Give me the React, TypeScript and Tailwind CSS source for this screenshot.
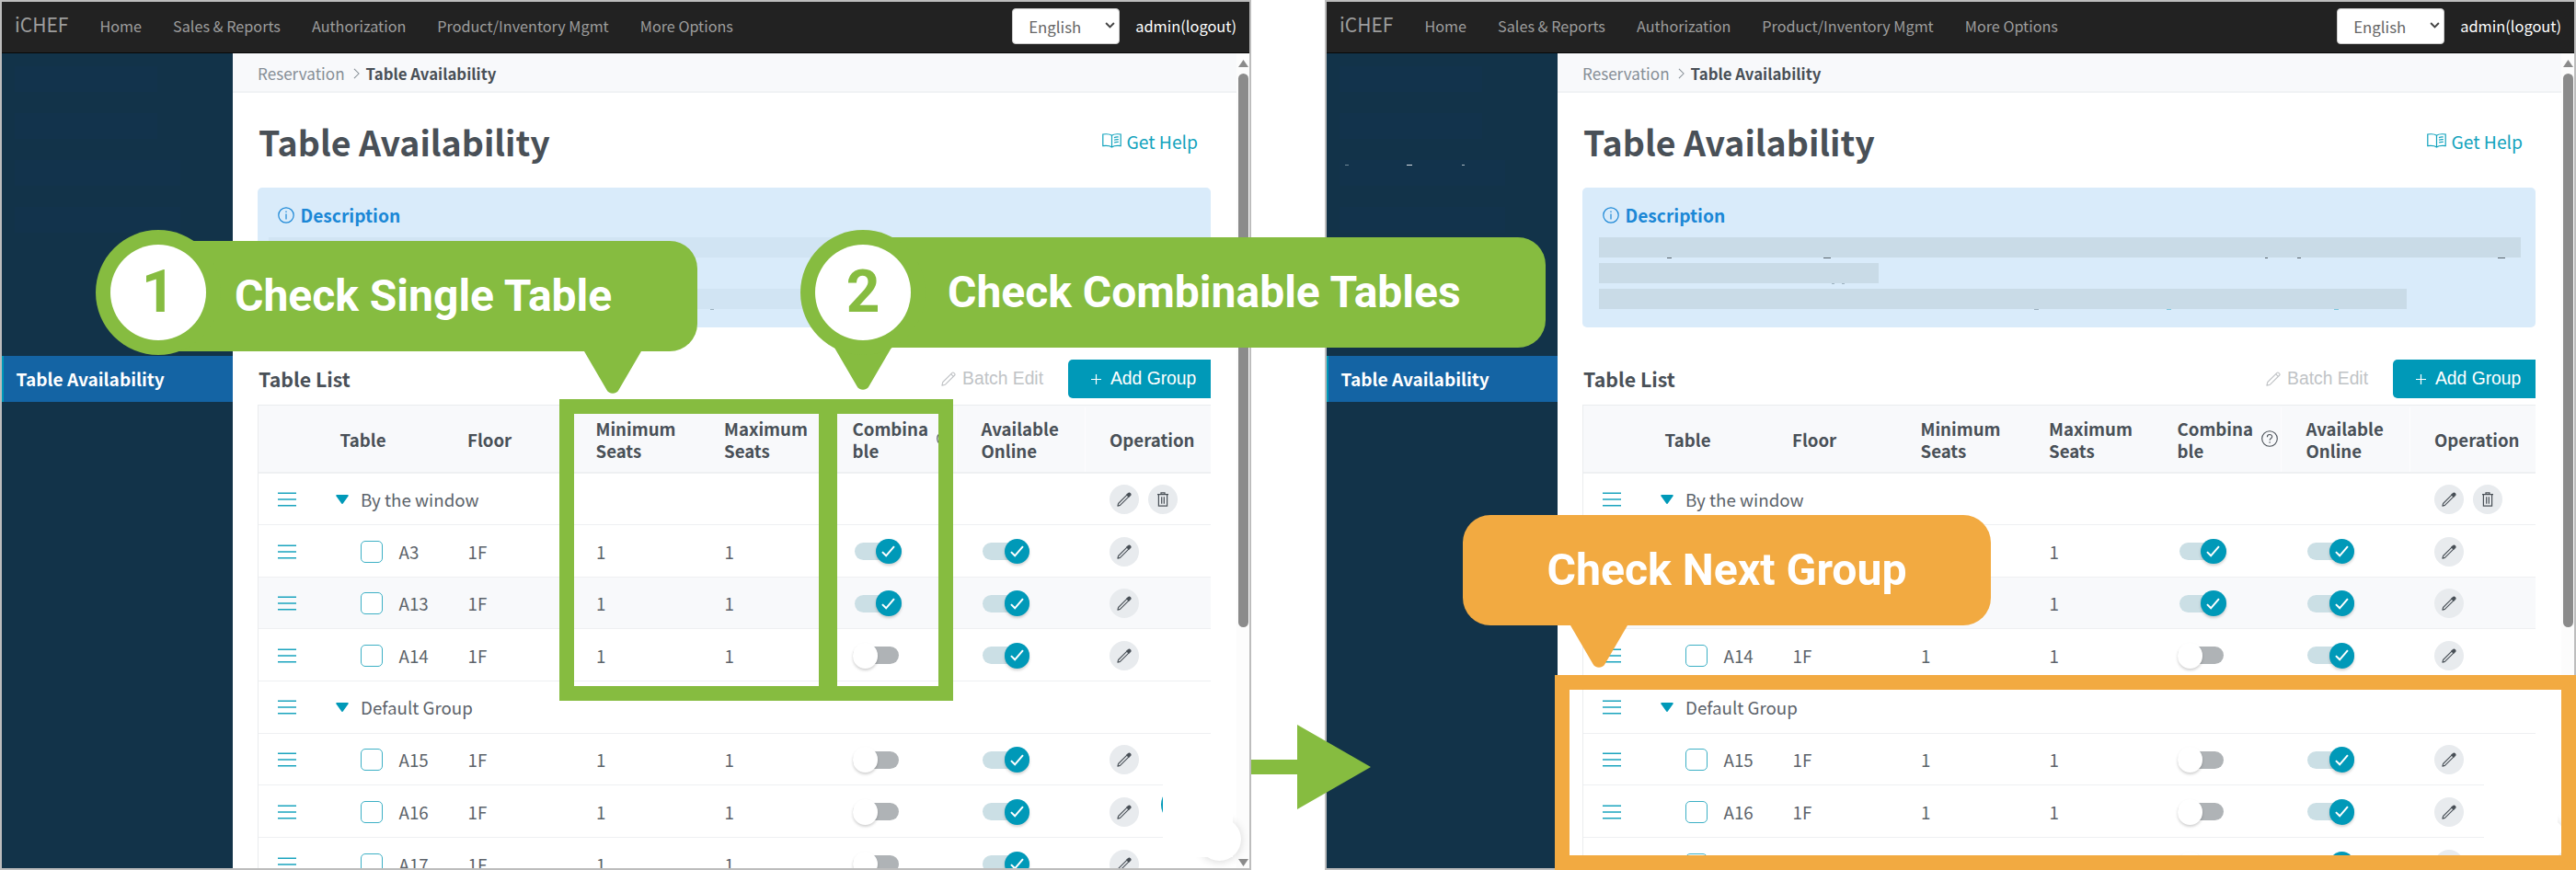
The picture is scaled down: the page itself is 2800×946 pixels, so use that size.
import React from 'react';

type Row = { kind: 'group' | 'table'; name: string; combinable?: boolean; highlighted?: boolean; removable?: boolean; editable?: boolean };

const rows: Row[] = [
  { kind: 'group', name: 'By the window', editable: true, removable: true },
  { kind: 'table', name: 'A3', combinable: true },
  { kind: 'table', name: 'A13', combinable: true, highlighted: true },
  { kind: 'table', name: 'A14' },
  { kind: 'group', name: 'Default Group' },
  { kind: 'table', name: 'A15' },
  { kind: 'table', name: 'A16' },
  { kind: 'table', name: 'A17' },
];

const navItems = ['Home', 'Sales & Reports', 'Authorization', 'Product/Inventory Mgmt', 'More Options'];

function PencilIcon({ className }: { className?: string }) {
  return (
    <svg viewBox="0 0 16 16" className={className} fill="none" stroke="currentColor" strokeWidth="1.1" strokeLinejoin="round">
      <path d="M.9 15.1l.7-2.6L11.2 2.9l1.9 1.9L3.5 14.4z" />
      <path d="M10.8 3l1.7-1.7a1.2 1.2 0 0 1 1.7 0l.5.5a1.2 1.2 0 0 1 0 1.7L13 5.2z" fill="currentColor" />
    </svg>
  );
}

function PencilOutlineIcon({ className }: { className?: string }) {
  return (
    <svg viewBox="0 0 16 16" className={className} fill="none" stroke="currentColor" strokeWidth="1.1" strokeLinejoin="round">
      <path d="M.9 15.1l.9-3.6L12 1.3a1.2 1.2 0 0 1 1.7 0l1 1a1.2 1.2 0 0 1 0 1.7L4.5 14.2z" />
      <path d="M10.6 2.7l2.7 2.7" />
    </svg>
  );
}

function TrashIcon() {
  return (
    <svg viewBox="0 0 12 16" className="h-4 w-3 text-[#495057]" fill="none" stroke="currentColor" strokeWidth="1.2">
      <path d="M0 2.6h12M4 2.4V.9h4v1.5M1.4 2.8v12.4h9.2V2.8" />
      <path d="M4.7 5.2v7.6M7.3 5.2v7.6" />
    </svg>
  );
}

function HandleIcon() {
  return (
    <svg viewBox="0 0 20 16" className="h-4 w-5" stroke="#1aa4be" strokeWidth="1.5">
      <path d="M0 1.2h20M0 8h20M0 14.8h20" />
    </svg>
  );
}

function CircleButton({ children }: { children: React.ReactNode }) {
  return <button className="flex size-8 items-center justify-center rounded-full bg-[#e8ebee]">{children}</button>;
}

function Toggle({ on }: { on?: boolean }) {
  if (on) {
    return (
      <span className="flex h-[19px] w-[51px] items-center justify-end rounded-full bg-[#cbdfe5]">
        <span className="flex size-[27.5px] shrink-0 items-center justify-center rounded-full bg-[#0099b8] shadow-[0_2px_3px_rgba(0,0,0,0.18)]">
          <svg viewBox="0 0 14 12" className="h-[13px] w-[15px]" fill="none" stroke="#fff" strokeWidth="1.9">
            <path d="M.9 6.6l3.9 3.9L13 1" />
          </svg>
        </span>
      </span>
    );
  }
  return (
    <span className="-ml-[2px] flex h-[19px] w-[50px] items-center rounded-full bg-[#afb3b6]">
      <span className="size-[27.5px] shrink-0 rounded-full bg-white shadow-[0_2px_3px_rgba(0,0,0,0.18)]" />
    </span>
  );
}

function TopBar() {
  return (
    <header className="flex h-[56px] shrink-0 border-b border-[#080808] bg-[#222222] text-[#9d9d9d]">
      <div className="flex items-baseline pt-[12px] pl-[14px] leading-[24px]">
        <span className="mr-[33px] w-[59.5px] text-[21px] whitespace-nowrap">iCHEF</span>
        <nav className="flex gap-[34px] text-[16.2px] whitespace-nowrap">
          {navItems.map((item) => (
            <span key={item}>{item}</span>
          ))}
        </nav>
      </div>
      <div className="ml-auto flex pr-[14px]">
        <button className="mt-[7px] flex h-[39px] w-[117px] items-center rounded-[4px] border border-[#cccccc] bg-white pl-[17px] text-[16.8px] leading-[24px] text-[#666666]">
          <span className="pt-px">English</span>
          <svg viewBox="0 0 12 8" className="mr-[4px] mb-[3px] ml-auto h-[7px] w-[11px]" fill="none" stroke="#444" strokeWidth="2.2">
            <path d="M1 1.2l5 5 5-5" />
          </svg>
        </button>
        <span className="mt-[14px] ml-[17px] text-[16.4px] leading-[24px] text-white">admin(logout)</span>
      </div>
    </header>
  );
}

function Sidebar({ variant }: { variant: 'first' | 'second' }) {
  return (
    <aside className="relative flex w-[251px] shrink-0 flex-col bg-[#123349]">
      <div className="flex h-[329px] flex-col gap-[23px] pt-[14px] pl-[14px]">
        <div className="h-[28px] w-[155px] bg-[#12334c]" />
        <div className="h-[28px] w-[155px] bg-[#12334c]" />
        <div className="h-[28px] w-[180px] bg-[#12334c]" />
        <div className="h-[28px] w-[180px] bg-[#12334c]" />
      </div>
      <div className="flex h-[50px] items-center border-l-2 border-[#0099b8] bg-[#1464a4] pl-[13.5px] text-[19.1px] leading-[24px] font-bold text-white">
        Table Availability
      </div>
      {variant === 'second' && (
        <>
          <span className="absolute top-[121px] left-[20px] h-px w-[4px] bg-[#6f8797]" />
          <span className="absolute top-[121px] left-[87px] h-px w-[6px] bg-[#d7dfe4]" />
          <span className="absolute top-[121px] left-[147px] h-px w-[3px] bg-[#a9b8c2]" />
        </>
      )}
    </aside>
  );
}

function Scrollbar() {
  return (
    <div className="flex w-[14px] shrink-0 flex-col items-center bg-[#fcfcfc] pr-[1px] pl-[2px]">
      <svg viewBox="0 0 11 8" className="mt-[7px] h-[8px] w-[11px]" fill="#8b8b8b">
        <path d="M5.5 0L11 8H0z" />
      </svg>
      <div className="mt-[7px] h-[602px] w-[11px] rounded-full bg-[#8b8b8b]" />
      <svg viewBox="0 0 11 8" className="mt-auto mb-[2px] h-[8px] w-[11px]" fill="#8b8b8b">
        <path d="M5.5 8L0 0h11z" />
      </svg>
    </div>
  );
}

function Description({ variant }: { variant: 'first' | 'second' }) {
  return (
    <section className="relative h-[152px] rounded-[5px] bg-[#d9ebfa] pt-[18px]">
      <div className="flex h-[24px] items-center pl-[22px] text-[#1b87d6]">
        <svg viewBox="0 0 18 18" className="size-[18px]" fill="none" stroke="currentColor" strokeWidth="1.2">
          <circle cx="9" cy="9" r="8.2" />
          <path d="M9 7.4v6M9 4.6v1.5" />
        </svg>
        <h2 className="ml-[6.5px] text-[19.2px] leading-[24px] font-bold">Description</h2>
      </div>
      {variant === 'first' ? (
        <div className="flex flex-col gap-[6px] pt-[12px] pl-[12px]">
          <div className="h-[22px] w-[1002px] bg-[#d1e4f3]" />
          <div className="h-[22px] w-[304px] bg-[#d1e4f3]" />
          <div className="h-[22px] w-[878px] bg-[#d1e4f3]" />
          <span className="absolute top-[132px] left-[492px] h-px w-[4px] bg-[#9db2c0]" />
        </div>
      ) : (
        <div className="flex flex-col gap-[6px] pt-[12px] pl-[18px]">
          <div className="h-[22px] w-[1002px] bg-[#c9dbe7]" />
          <div className="h-[22px] w-[304px] bg-[#c9dbe7]" />
          <div className="h-[22px] w-[878px] bg-[#c9dbe7]" />
          <span className="absolute top-[76px] left-[92px] h-px w-[5px] bg-[#5b6770]" />
          <span className="absolute top-[76px] left-[262px] h-px w-[8px] bg-[#5b6770]" />
          <span className="absolute top-[76px] left-[742px] h-px w-[3px] bg-[#5b6770]" />
          <span className="absolute top-[76px] left-[777px] h-px w-[4px] bg-[#5b6770]" />
          <span className="absolute top-[76px] left-[995px] h-px w-[8px] bg-[#5b6770]" />
          <span className="absolute top-[104px] left-[271px] h-px w-[3px] bg-[#9db2c0]" />
          <span className="absolute top-[104px] left-[282px] h-px w-[3px] bg-[#9db2c0]" />
          <span className="absolute top-[132px] left-[491px] h-px w-[5px] bg-[#9db2c0]" />
          <span className="absolute top-[132px] left-[635px] h-px w-[5px] bg-[#7cc6dc]" />
          <span className="absolute top-[132px] left-[817px] h-px w-[5px] bg-[#7cc6dc]" />
        </div>
      )}
    </section>
  );
}

function TableHeader() {
  return (
    <div className="grid h-[75px] grid-cols-[60.5px_repeat(7,139.5px)] items-stretch border-t border-b-2 border-t-[#eaecee] border-b-[#eef0f2] bg-[#f8f9fb] pt-[1.5px] text-[18.65px] leading-[23.5px] font-bold text-[#495057]">
      <div />
      <div className="flex items-center pl-[28px]">Table</div>
      <div className="flex items-center pl-[27px]">Floor</div>
      <div className="flex items-center pl-[27px]">
        Minimum
        <br />
        Seats
      </div>
      <div className="flex items-center pl-[27px]">
        Maximum
        <br />
        Seats
      </div>
      <div className="flex items-center pl-[27px]">
        <span className="w-[91px]">
          Combina
          <br />
          ble
        </span>
        <svg viewBox="0 0 18 18" className="mb-[2px] size-[18px] shrink-0" fill="none" stroke="#495057" strokeWidth="1.1">
          <circle cx="9" cy="9" r="8.3" />
          <path d="M6.4 7.2c0-3.6 5.3-3.4 5.3-.4 0 1.9-2.6 1.9-2.6 3.9M9.1 12.2v1.5" />
        </svg>
      </div>
      <div className="flex items-center border-l border-[#fdfdfe] pl-[26.5px]">
        Available
        <br />
        Online
      </div>
      <div className="flex items-center border-l border-[#fdfdfe] pl-[26.5px]">Operation</div>
    </div>
  );
}

function GroupRow({ row, first }: { row: Row; first: boolean }) {
  return (
    <div
      className={
        first
          ? 'grid h-[56px] grid-cols-[60.5px_837px_139.5px] items-center border-b border-[#eef0f2]'
          : 'grid h-[56.67px] grid-cols-[60.5px_837px_139.5px] items-center border-b border-[#eef0f2] pt-px'
      }
    >
      <div className="pl-[21px]">
        <HandleIcon />
      </div>
      <div className="flex items-center pl-[23.5px]">
        <svg viewBox="0 0 14 10" className="h-[10px] w-[14px]" fill="#0099b8">
          <path d="M1 0h12a.8.8 0 0 1 .7 1.2L7.8 9.5a1 1 0 0 1-1.6 0L.3 1.2A.8.8 0 0 1 1 0z" />
        </svg>
        <span className="ml-[13px]">{row.name}</span>
      </div>
      <div className="flex gap-[10px] pl-[27.5px]">
        {row.editable && (
          <CircleButton>
            <PencilIcon className="size-4 text-[#495057]" />
          </CircleButton>
        )}
        {row.removable && (
          <CircleButton>
            <TrashIcon />
          </CircleButton>
        )}
      </div>
    </div>
  );
}

function TableRow({ row }: { row: Row }) {
  return (
    <div
      className={
        row.highlighted
          ? 'grid h-[56.67px] grid-cols-[60.5px_repeat(7,139.5px)] items-center border-b border-[#eef0f2] bg-[#f8f9fb] pt-[1.5px]'
          : 'grid h-[56.67px] grid-cols-[60.5px_repeat(7,139.5px)] items-center border-b border-[#eef0f2] pt-[1.5px]'
      }
    >
      <div className="pl-[21px]">
        <HandleIcon />
      </div>
      <div className="flex items-center pl-[50px]">
        <span className="size-[24px] rounded-[5px] border-[1.5px] border-[#3db0c5] bg-white" />
        <span className="ml-[18px]">{row.name}</span>
      </div>
      <div className="pl-[27.5px]">1F</div>
      <div className="pl-[27.5px]">1</div>
      <div className="pl-[27.5px]">1</div>
      <div className="pl-[29px]">
        <Toggle on={row.combinable} />
      </div>
      <div className="pl-[29px]">
        <Toggle on />
      </div>
      <div className="pl-[27.5px]">
        <CircleButton>
          <PencilIcon className="size-4 text-[#495057]" />
        </CircleButton>
      </div>
    </div>
  );
}

function ChatBubbleCover({ variant }: { variant: 'first' | 'second' }) {
  return (
    <>
      <div className="absolute top-[887px] left-[1300px] size-[47px] rounded-full bg-white shadow-[0_1px_10px_rgba(0,0,0,0.16)]" />
      {variant === 'first' ? (
        <>
          <div className="absolute top-[853px] left-[1259.5px] size-[40px] rounded-full bg-[#0099b8]" />
          <div className="absolute top-[800px] left-[1262px] h-[130px] w-[76px] bg-white" />
        </>
      ) : (
        <div className="absolute top-[800px] left-[1258px] h-[130px] w-[80px] bg-white" />
      )}
    </>
  );
}

function Screen({ variant }: { variant: 'first' | 'second' }) {
  return (
    <div className="relative flex h-[946px] w-[1360px] shrink-0 flex-col overflow-hidden border-2 border-[#bdbdbd] bg-white">
      <TopBar />
      <div className="flex min-h-0 flex-1">
        <Sidebar variant={variant} />
        <main className="min-w-0 flex-1 overflow-hidden text-[#495057]">
          <div className="flex h-[43px] items-center border-b-2 border-[#f0f2f4] bg-[#f8f9fb] pt-[3px] pl-[27px] leading-[24px]">
            <span className="text-[17.1px] text-[#868e96]">Reservation</span>
            <svg viewBox="0 0 8 14" className="mr-[7px] mb-[1px] ml-[9px] h-[12px] w-[7px]" fill="none" stroke="#868e96" strokeWidth="1.2">
              <path d="M1 1l6 6-6 6" />
            </svg>
            <span className="text-[16.8px] font-bold">Table Availability</span>
          </div>
          <div className="w-[1063px] pl-[27px]">
            <div className="flex h-[103px] items-start justify-between pt-[29px] pl-px">
              <h1 className="text-[37.5px] leading-[48px] font-bold">Table Availability</h1>
              <a className="mt-[12px] mr-[14px] flex items-center text-[19.3px] leading-[24px] text-[#12a3bd]">
                <svg viewBox="0 0 21 16" className="mr-[6px] mb-[3px] h-[16px] w-[21px]" fill="none" stroke="currentColor" strokeWidth="1.2">
                  <path d="M10.5 2.2C8.5.7 5 .5.8 1v12.6c4-.4 7.6-.2 9.7 1.4 2.1-1.6 5.7-1.8 9.7-1.4V1C16 .5 12.5.7 10.5 2.2zM10.5 2.2V15" />
                  <path d="M13 4.6c1.5-.6 3-.7 4.8-.6M13 7.3c1.5-.6 3-.7 4.8-.6M13 10c1.5-.6 3-.7 4.8-.6" />
                </svg>
                Get Help
              </a>
            </div>
            <Description variant={variant} />
            <div className="mt-[35px] mb-[7px] flex h-[42px] items-center pl-px">
              <h2 className="text-[21.3px] leading-[28px] font-bold">Table List</h2>
              <div className="ml-auto flex h-full items-center text-[19.3px]">
                <PencilOutlineIcon className="size-4 text-[#c0c3c6]" />
                <span className="ml-[7px] font-['Liberation_Sans',Arial,sans-serif] text-[#c0c3c6]">Batch Edit</span>
                <button className="ml-[27px] flex h-full w-[155px] items-center rounded-l-[5px] bg-[#0099b8] pl-[25px] font-['Liberation_Sans',Arial,sans-serif] text-white">
                  <svg viewBox="0 0 11 11" className="h-[11px] w-[11px]" stroke="#fff" strokeWidth="1.2">
                    <path d="M5.5 0v11M0 5.5h11" />
                  </svg>
                  <span className="ml-[10px]">Add Group</span>
                </button>
              </div>
            </div>
            <div className="w-[1036px] overflow-hidden border-l border-[#eaecee] text-[18.75px] leading-[24px] text-[#5c636a]">
              <TableHeader />
              {rows.map((row, i) => (row.kind === 'group' ? <GroupRow key={row.name} row={row} first={i === 0} /> : <TableRow key={row.name} row={row} />))}
            </div>
          </div>
        </main>
        <Scrollbar />
      </div>
      <ChatBubbleCover variant={variant} />
    </div>
  );
}

function Tail({ className }: { className: string }) {
  return (
    <svg viewBox="0 0 62 47" className={className} fill="currentColor">
      <path d="M0 0h62v1L37.5 43c-2.5 5-10.5 5-13 0L0 1z" />
    </svg>
  );
}

function Step({ n }: { n: number }) {
  return (
    <div className="flex size-[136px] items-center justify-center rounded-full bg-[#86bc40]">
      <div className="flex size-[104px] items-center justify-center rounded-full bg-white text-[64px] leading-[64px] font-bold text-[#86bc40]">
        {n}
      </div>
    </div>
  );
}

export default function App() {
  return (
    <div className="relative flex h-[946px] w-[2800px] gap-[80px] overflow-hidden bg-white font-['Noto_Sans_CJK_TC','Noto_Sans',sans-serif]">
      <Screen variant="first" />
      <Screen variant="second" />

      <svg viewBox="0 0 130 92" className="absolute top-[788px] left-[1360px] h-[92px] w-[130px]" fill="#86bc40">
        <path d="M0 38h50V0l80 46-80 46V54H0z" />
      </svg>

      <div className="absolute top-[434px] left-[608px] flex h-[328px] w-[428px] border-[16px] border-[#86bc40]">
        <div className="ml-[266px] w-[20px] bg-[#86bc40]" />
      </div>

      <div className="font-[Roboto,sans-serif]">
        <div className="absolute top-[262px] left-[172px] flex h-[120px] w-[586px] items-center rounded-r-[30px] bg-[#86bc40] pl-[83px] text-[48px] leading-[56px] font-bold whitespace-nowrap text-white">
          Check Single Table
        </div>
        <Tail className="absolute top-[381px] left-[635px] h-[47px] w-[62px] text-[#86bc40]" />
        <div className="absolute top-[250px] left-[104px]">
          <Step n={1} />
        </div>

        <div className="absolute top-[258px] left-[938px] flex h-[120px] w-[742px] items-center rounded-r-[30px] bg-[#86bc40] pl-[92px] text-[48px] leading-[56px] font-bold whitespace-nowrap text-white">
          Check Combinable Tables
        </div>
        <Tail className="absolute top-[377px] left-[907px] h-[47px] w-[62px] text-[#86bc40]" />
        <div className="absolute top-[250px] left-[870px]">
          <Step n={2} />
        </div>

        <div className="absolute top-[734px] left-[1690px] h-[212px] w-[1110px] border-[16px] border-[#f2aa41]" />
        <div className="absolute top-[560px] left-[1590px] flex h-[120px] w-[574px] items-center justify-center rounded-[30px] bg-[#f2aa41] text-[48.2px] leading-[56px] font-bold whitespace-nowrap text-white">
          Check Next Group
        </div>
        <Tail className="absolute top-[679px] left-[1707px] h-[47px] w-[62px] text-[#f2aa41]" />
      </div>
    </div>
  );
}
